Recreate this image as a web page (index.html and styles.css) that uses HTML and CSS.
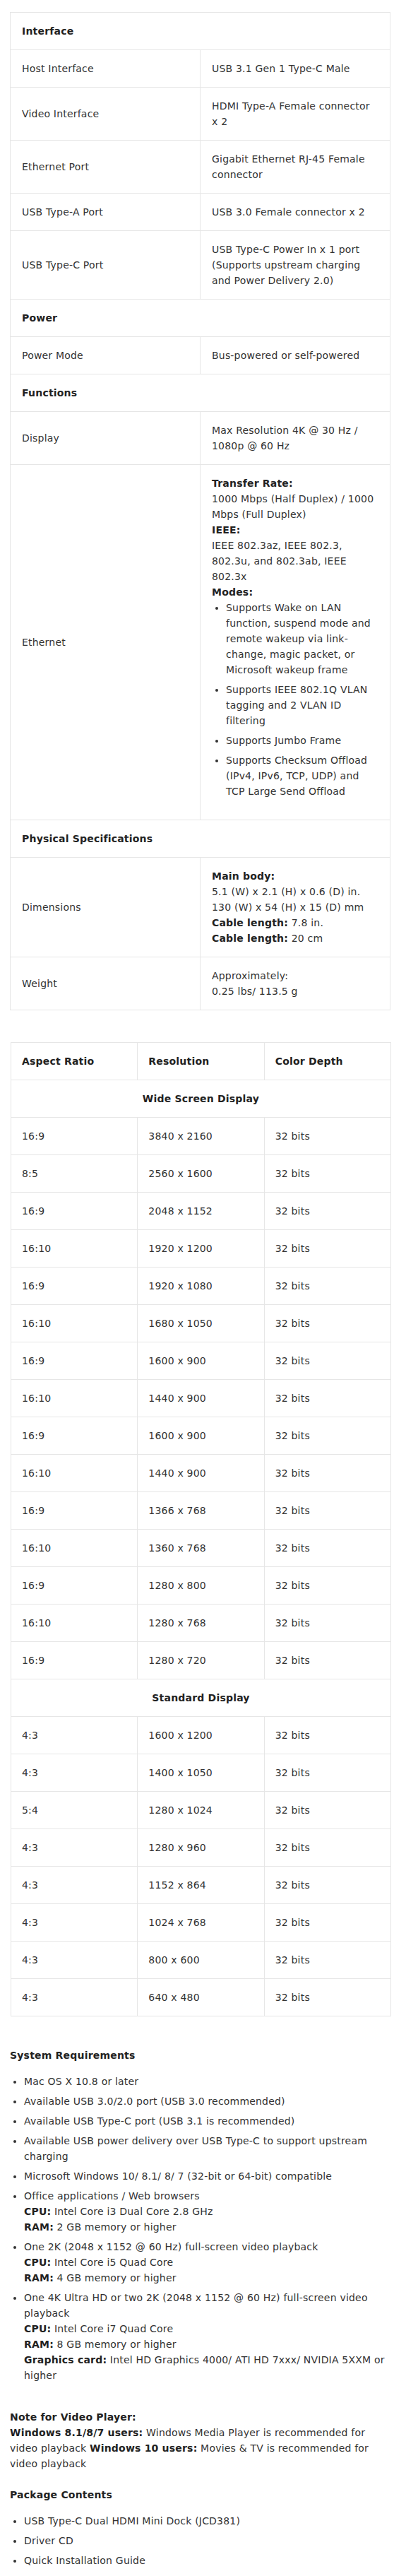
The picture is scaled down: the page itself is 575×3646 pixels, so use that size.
FILE: index.html
```html
<!DOCTYPE html>
<html lang="en">
<head>
<meta charset="utf-8">
<title>Specifications</title>
<link rel="stylesheet" href="styles.css">
</head>
<body>
<div class="page">
  <table class="spec">
    <tbody>
      <tr class="group"><th colspan="2">Interface</th></tr>
      <tr><td>Host Interface</td><td>USB 3.1 Gen 1 Type-C Male</td></tr>
      <tr><td>Video Interface</td><td>HDMI Type-A Female connector x 2</td></tr>
      <tr><td>Ethernet Port</td><td>Gigabit Ethernet RJ-45 Female connector</td></tr>
      <tr><td>USB Type-A Port</td><td>USB 3.0 Female connector x 2</td></tr>
      <tr><td>USB Type-C Port</td><td>USB Type-C Power In x 1 port (Supports upstream charging and Power Delivery 2.0)</td></tr>
      <tr class="group"><th colspan="2">Power</th></tr>
      <tr><td>Power Mode</td><td>Bus-powered or self-powered</td></tr>
      <tr class="group"><th colspan="2">Functions</th></tr>
      <tr><td>Display</td><td>Max Resolution 4K @ 30 Hz / 1080p @ 60 Hz</td></tr>
      <tr>
        <td>Ethernet</td>
        <td>
          <strong>Transfer Rate:</strong><br>
          1000 Mbps (Half Duplex) / 1000 Mbps (Full Duplex)<br>
          <strong>IEEE:</strong><br>
          IEEE 802.3az, IEEE 802.3, 802.3u, and 802.3ab, IEEE 802.3x<br>
          <strong>Modes:</strong>
          <ul class="cell-list">
            <li>Supports Wake on LAN function, suspend mode and remote wakeup via link-change, magic packet, or Microsoft wakeup frame</li>
            <li>Supports IEEE 802.1Q VLAN tagging and 2 VLAN ID filtering</li>
            <li>Supports Jumbo Frame</li>
            <li>Supports Checksum Offload (IPv4, IPv6, TCP, UDP) and TCP Large Send Offload</li>
          </ul>
        </td>
      </tr>
      <tr class="group"><th colspan="2">Physical Specifications</th></tr>
      <tr>
        <td>Dimensions</td>
        <td>
          <strong>Main body:</strong><br>
          5.1 (W) x 2.1 (H) x 0.6 (D) in.<br>
          130 (W) x 54 (H) x 15 (D) mm<br>
          <strong>Cable length:</strong> 7.8 in.<br>
          <strong>Cable length:</strong> 20 cm
        </td>
      </tr>
      <tr><td>Weight</td><td>Approximately:<br>0.25 lbs/ 113.5 g</td></tr>
    </tbody>
  </table>

  <table class="res">
    <thead>
      <tr><th>Aspect Ratio</th><th>Resolution</th><th>Color Depth</th></tr>
    </thead>
    <tbody>
      <tr class="sub"><th colspan="3">Wide Screen Display</th></tr>
      <tr><td>16:9</td><td>3840 x 2160</td><td>32 bits</td></tr>
      <tr><td>8:5</td><td>2560 x 1600</td><td>32 bits</td></tr>
      <tr><td>16:9</td><td>2048 x 1152</td><td>32 bits</td></tr>
      <tr><td>16:10</td><td>1920 x 1200</td><td>32 bits</td></tr>
      <tr><td>16:9</td><td>1920 x 1080</td><td>32 bits</td></tr>
      <tr><td>16:10</td><td>1680 x 1050</td><td>32 bits</td></tr>
      <tr><td>16:9</td><td>1600 x 900</td><td>32 bits</td></tr>
      <tr><td>16:10</td><td>1440 x 900</td><td>32 bits</td></tr>
      <tr><td>16:9</td><td>1600 x 900</td><td>32 bits</td></tr>
      <tr><td>16:10</td><td>1440 x 900</td><td>32 bits</td></tr>
      <tr><td>16:9</td><td>1366 x 768</td><td>32 bits</td></tr>
      <tr><td>16:10</td><td>1360 x 768</td><td>32 bits</td></tr>
      <tr><td>16:9</td><td>1280 x 800</td><td>32 bits</td></tr>
      <tr><td>16:10</td><td>1280 x 768</td><td>32 bits</td></tr>
      <tr><td>16:9</td><td>1280 x 720</td><td>32 bits</td></tr>
      <tr class="sub"><th colspan="3">Standard Display</th></tr>
      <tr><td>4:3</td><td>1600 x 1200</td><td>32 bits</td></tr>
      <tr><td>4:3</td><td>1400 x 1050</td><td>32 bits</td></tr>
      <tr><td>5:4</td><td>1280 x 1024</td><td>32 bits</td></tr>
      <tr><td>4:3</td><td>1280 x 960</td><td>32 bits</td></tr>
      <tr><td>4:3</td><td>1152 x 864</td><td>32 bits</td></tr>
      <tr><td>4:3</td><td>1024 x 768</td><td>32 bits</td></tr>
      <tr><td>4:3</td><td>800 x 600</td><td>32 bits</td></tr>
      <tr><td>4:3</td><td>640 x 480</td><td>32 bits</td></tr>
    </tbody>
  </table>

  <h4 class="title title-req">System Requirements</h4>
  <ul class="list list-req">
    <li>Mac OS X 10.8 or later</li>
    <li>Available USB 3.0/2.0 port (USB 3.0 recommended)</li>
    <li>Available USB Type-C port (USB 3.1 is recommended)</li>
    <li>Available USB power delivery over USB Type-C to support upstream charging</li>
    <li>Microsoft Windows 10/ 8.1/ 8/ 7 (32-bit or 64-bit) compatible</li>
    <li>Office applications / Web browsers<br><strong>CPU:</strong> Intel Core i3 Dual Core 2.8 GHz<br><strong>RAM:</strong> 2 GB memory or higher</li>
    <li>One 2K (2048 x 1152 @ 60 Hz) full-screen video playback<br><strong>CPU:</strong> Intel Core i5 Quad Core<br><strong>RAM:</strong> 4 GB memory or higher</li>
    <li>One 4K Ultra HD or two 2K (2048 x 1152 @ 60 Hz) full-screen video playback<br><strong>CPU:</strong> Intel Core i7 Quad Core<br><strong>RAM:</strong> 8 GB memory or higher<br><strong>Graphics card:</strong> Intel HD Graphics 4000/ ATI HD 7xxx/ NVIDIA 5XXM or higher</li>
  </ul>

  <p class="note"><strong>Note for Video Player:</strong><br><strong>Windows 8.1/8/7 users:</strong> Windows Media Player is recommended for video playback <strong>Windows 10 users:</strong> Movies &amp; TV is recommended for video playback</p>

  <h4 class="title">Package Contents</h4>
  <ul class="list">
    <li>USB Type-C Dual HDMI Mini Dock (JCD381)</li>
    <li>Driver CD</li>
    <li>Quick Installation Guide</li>
  </ul>
</div>
</body>
</html>
```

FILE: styles.css
```css
html, body {
  margin: 0;
  padding: 0;
  background: #ffffff;
}

body {
  color: #333333;
  font-family: "DejaVu Sans", Verdana, sans-serif;
  font-size: 14px;
  line-height: 22px;
  letter-spacing: 0.2px;
}

.page {
  width: 539px;
  padding: 17px 0 16px 14px;
}

strong {
  color: #222222;
  font-weight: bold;
}

table {
  border-collapse: collapse;
  table-layout: fixed;
  width: 100%;
}

td,
th {
  border: 1px solid #e6e6e6;
  padding: 15px 16px;
  vertical-align: middle;
  text-align: left;
  font-weight: normal;
}

th {
  color: #222222;
  font-weight: bold;
}

.spec td {
  width: 50%;
}

.res {
  margin-top: 45px;
  margin-left: 1px;
}

.res td,
.res th {
  padding-left: 15px;
  padding-right: 15px;
}

.res .sub th {
  text-align: center;
}

.cell-list {
  margin: 0 0 14px;
  padding-left: 20px;
}

.cell-list li {
  margin-bottom: 6px;
}

.title {
  margin: 0 0 15px;
  font-size: 14px;
  line-height: 22px;
  color: #222222;
}

.title-req {
  margin-top: 44px;
}

.list {
  margin: 0;
  padding-left: 20px;
}

.list li {
  margin-bottom: 6px;
}

.list-req {
  margin-bottom: 37px;
}

.note {
  margin: 0 0 22px;
}
```
